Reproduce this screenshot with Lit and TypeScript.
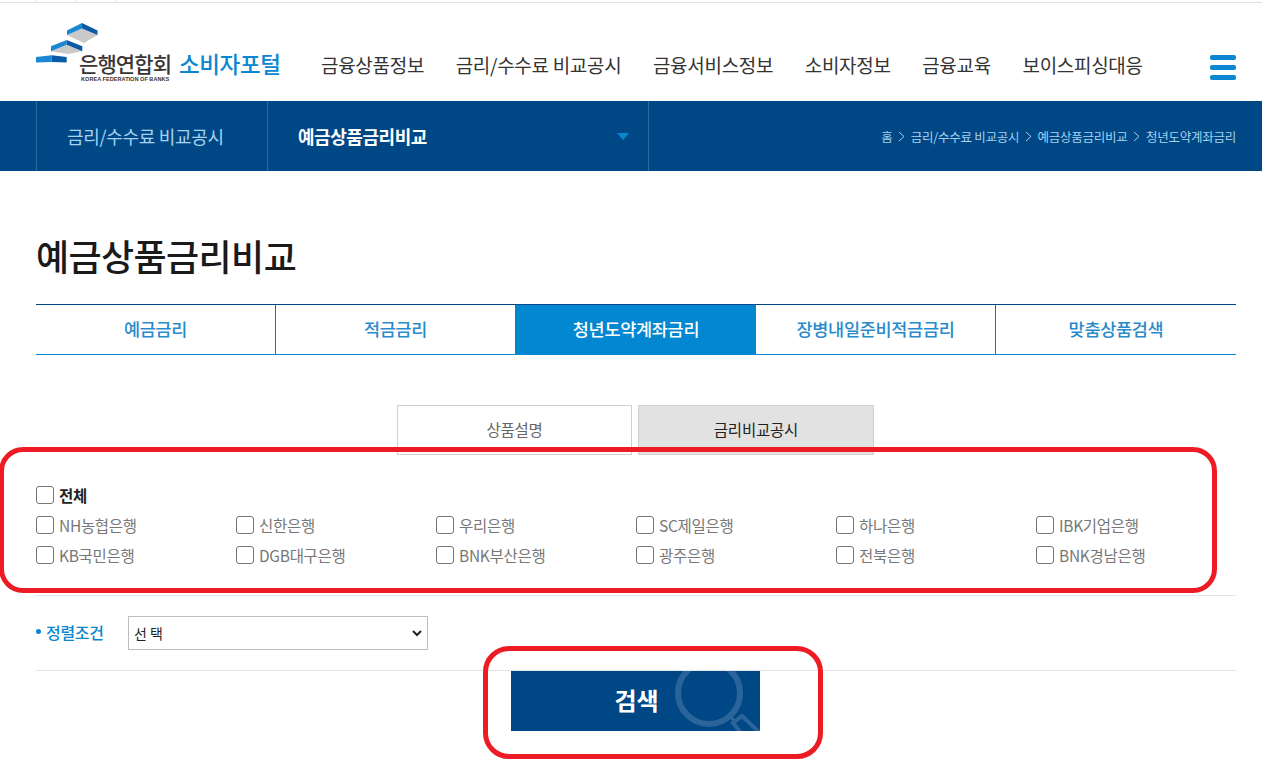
import { LitElement, html, css } from "lit";
import { customElement } from "lit/decorators.js";

const nav = ["금융상품정보", "금리/수수료 비교공시", "금융서비스정보", "소비자정보", "금융교육", "보이스피싱대응"];
const tabs = ["예금금리", "적금금리", "청년도약계좌금리", "장병내일준비적금금리", "맞춤상품검색"];
const banks = ["NH농협은행", "신한은행", "우리은행", "SC제일은행", "하나은행", "IBK기업은행", "KB국민은행", "DGB대구은행", "BNK부산은행", "광주은행", "전북은행", "BNK경남은행"];
const crumbs = ["홈", "금리/수수료 비교공시", "예금상품금리비교", "청년도약계좌금리"];

@customElement("app-root")
export class AppRoot extends LitElement {
  static styles = css`
    :host { display: block; position: relative; height: 760px; overflow: hidden; background: #fff; font-family: "Noto Sans CJK KR", "Noto Sans", sans-serif; color: #333; }
    .strip { height: 2px; border-bottom: 1px solid #e1e1e1; display: flex; padding-left: 36px; }
    .strip i { width: 40px; box-sizing: border-box; border-left: 1px solid #e1e1e1; }
    .strip i:last-child { border-right: 1px solid #e1e1e1; }
    .head { height: 98px; display: flex; align-items: center; padding: 0 26px 0 36px; box-sizing: border-box; }
    .logo { position: relative; width: 245px; height: 64px; flex: none; }
    .logo svg { position: absolute; left: 0; top: 0; }
    .logo .ko { position: absolute; left: 43px; top: 31px; font-size: 21px; line-height: 24px; font-weight: 500; color: #3a3533; letter-spacing: -0.9px; white-space: nowrap; }
    .logo .en { position: absolute; left: 45px; top: 56px; font-family: "Liberation Sans", sans-serif; font-size: 5.6px; line-height: 6px; font-weight: 700; color: #3a3533; white-space: nowrap; }
    .logo .portal { position: absolute; left: 143px; top: 28px; font-size: 22.5px; line-height: 30px; font-weight: 500; color: #0a87d0; letter-spacing: -0.4px; white-space: nowrap; }
    nav { display: flex; gap: 31.55px; margin-left: 40px; font-size: 19px; letter-spacing: -0.3px; color: #333; white-space: nowrap; flex: 1; padding-top: 24px; }
    .burger { display: flex; flex-direction: column; gap: 5px; width: 26px; margin-top: 30px; }
    .burger i { height: 5px; border-radius: 2px; background: #0a87d0; }
    .bar { height: 70px; background: #004885; display: flex; align-items: center; padding: 0 26px 0 36px; color: #fff; }
    .bar .c1, .bar .c2 { height: 100%; box-sizing: border-box; display: flex; align-items: center; border-left: 1px solid #2d6a9f; padding-left: 30px; }
    .c1 { width: 231px; font-size: 18px; color: #a5d2ef; letter-spacing: -0.3px; }
    .bar .c2 { width: 382px; font-size: 18px; font-weight: 700; letter-spacing: -0.45px; border-right: 1px solid #2d6a9f; justify-content: space-between; padding-right: 19px; }
    .c2 b { width: 0; height: 0; border-left: 6px solid transparent; border-right: 6px solid transparent; border-top: 7px solid #0a87d0; }
    .crumbs { margin-left: auto; display: flex; align-items: center; gap: 5.7px; font-size: 12.5px; color: #a5d2ef; letter-spacing: -0.25px; white-space: nowrap; }
    .main { padding: 0 26px 0 36px; }
    h1 { margin: 0; padding-top: 57px; height: 76px; font-size: 36px; line-height: 54px; font-weight: 500; color: #1a1a1a; letter-spacing: -0.6px; }
    .tabs { display: grid; grid-template-columns: repeat(5, 1fr); height: 51px; border-top: 1px solid #004885; border-bottom: 1px solid #0a87d0; box-sizing: border-box; }
    .tabs div { display: flex; align-items: center; justify-content: center; padding-bottom: 2px; font-size: 17.5px; font-weight: 500; color: #2a8acb; letter-spacing: -0.3px; }
    .tabs .sep { border-right: 1px solid #2a6c9f; }
    .tabs .prev { border-right: 1px solid #0287d0; }
    .tabs .on { background: #0287d0; color: #fff; }
    .sub { display: flex; gap: 6px; margin: 50px 0 0 361px; }
    .sub div { height: 50px; box-sizing: border-box; border: 1px solid #cfcfcf; padding-bottom: 2px; display: flex; align-items: center; justify-content: center; font-size: 15.5px; color: #666; letter-spacing: -0.2px; }
    .sub div:first-child { width: 235px; }
    .sub div:last-child { width: 236px; background: #e2e2e2; color: #222; }
    .checks { padding-top: 25px; height: 141px; box-sizing: border-box; border-bottom: 1px solid #e5e5e5; }
    .row { display: grid; grid-template-columns: repeat(6, 200px); height: 30px; align-items: center; }
    label { display: flex; align-items: center; gap: 5px; font-size: 15.5px; color: #777; letter-spacing: -0.3px; white-space: nowrap; }
    label.all { color: #222; font-weight: 700; }
    .box { width: 18px; height: 18px; box-sizing: border-box; border: 1px solid #767676; border-radius: 3px; background: #fff; flex: none; }
    .sort { height: 75px; box-sizing: border-box; border-bottom: 1px solid #e5e5e5; display: flex; align-items: center; }
    .sort .lab { width: 92px; display: flex; align-items: center; gap: 5px; font-size: 16px; font-weight: 500; color: #0a87d0; letter-spacing: -0.3px; margin-top: -3px; }
    .sort .lab i { width: 5px; height: 5px; border-radius: 50%; background: #0a87d0; }
    .sel { width: 300px; height: 34px; box-sizing: border-box; border: 1px solid #bdbdbd; display: flex; align-items: center; justify-content: space-between; padding: 0 5px; font-size: 14px; color: #222; }
    .btn { position: relative; overflow: hidden; width: 249px; height: 60px; margin-left: 475px; background: #004885; display: flex; align-items: center; justify-content: center; color: #fff; font-size: 24px; font-weight: 700; padding: 0 0 3px 2px; box-sizing: border-box; }
    .btn svg { position: absolute; left: 162px; top: -8px; }
    .btn span { position: relative; }
    .mark { position: absolute; border: 5px solid #ed1c24; box-sizing: border-box; pointer-events: none; }
    .m1 { left: -1px; top: 447px; width: 1218px; height: 146px; border-radius: 24px; }
    .m2 { left: 483px; top: 646px; width: 340px; height: 113px; border-radius: 26px; }
  `;

  render() {
    return html`
      <div class="strip"><i></i><i></i></div>
      <div class="head">
        <div class="logo">
          <svg width="70" height="50" viewBox="0 0 70 50">
            <polygon points="31,15 46,8.5 61.5,15 48,23" fill="#c9c9c9"/>
            <polygon points="31,10.5 46,3 46,8.5 31,15" fill="#1a87d3"/>
            <polygon points="46,3 61.5,10.5 61.5,15 46,8.5" fill="#0b5aa5"/>
            <polygon points="15,31.3 30.7,24.7 46.3,31.3 32,34" fill="#c9c9c9"/>
            <polygon points="15,26.3 30.7,20 30.7,24.7 15,31.3" fill="#1a87d3"/>
            <polygon points="30.7,20 46.3,26.3 46.3,31.3 30.7,24.7" fill="#0b5aa5"/>
            <polygon points="0,37 15.7,35.3 15.7,42 0,42.5" fill="#1a87d3"/>
            <polygon points="15.7,35.3 30.7,37 30.7,42.5 15.7,42" fill="#0b5aa5"/>
          </svg>
          <span class="ko">은행연합회</span>
          <span class="en">KOREA FEDERATION OF BANKS</span>
          <span class="portal">소비자포털</span>
        </div>
        <nav>${nav.map((n) => html`<span>${n}</span>`)}</nav>
        <div class="burger"><i></i><i></i><i></i></div>
      </div>
      <div class="bar">
        <div class="c1">금리/수수료 비교공시</div>
        <div class="c2"><span>예금상품금리비교</span><b></b></div>
        <div class="crumbs">
          ${crumbs.map((c, i) => html`${i ? html`<svg width="7" height="11" viewBox="0 0 7 11"><path d="M1 1l5 4.5-5 4.5" fill="none" stroke="#a5d2ef"/></svg>` : ""}<span>${c}</span>`)}
        </div>
      </div>
      <div class="main">
        <h1>예금상품금리비교</h1>
        <div class="tabs">${tabs.map((t, i) => html`<div class=${i === 2 ? "on" : i === 1 ? "prev" : i === 4 ? "" : "sep"}>${t}</div>`)}</div>
        <div class="sub"><div>상품설명</div><div>금리비교공시</div></div>
        <div class="checks">
          <div class="row"><label class="all"><span class="box"></span>전체</label></div>
          <div class="row">${banks.slice(0, 6).map((b) => html`<label><span class="box"></span>${b}</label>`)}</div>
          <div class="row">${banks.slice(6).map((b) => html`<label><span class="box"></span>${b}</label>`)}</div>
        </div>
        <div class="sort">
          <div class="lab"><i></i>정렬조건</div>
          <div class="sel"><span>선 택</span>
            <svg width="10" height="7" viewBox="0 0 10 7"><path d="M1 1l4 4 4-4" fill="none" stroke="#222" stroke-width="2"/></svg>
          </div>
        </div>
        <div class="btn">
          <svg width="90" height="72" viewBox="0 0 90 72" fill="none" stroke="#2b649a">
            <circle cx="36" cy="30" r="31" stroke-width="6"/>
            <path d="M56 53 L62 58" stroke-width="3"/>
            <path d="M68 70 L60 60 L69 53 L87 70" stroke-width="4"/>
          </svg>
          <span>검색</span>
        </div>
      </div>
      <div class="mark m1"></div>
      <div class="mark m2"></div>
    `;
  }
}
